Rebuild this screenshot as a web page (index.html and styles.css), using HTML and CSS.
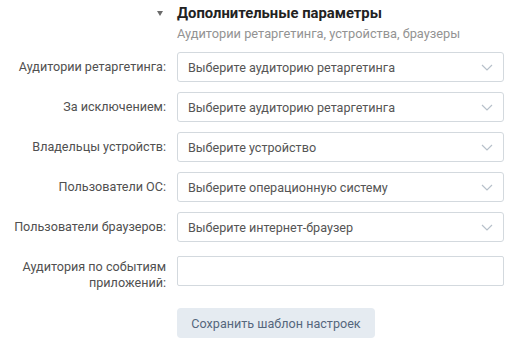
FILE: index.html
```html
<!DOCTYPE html>
<html lang="ru">
<head>
  <meta charset="UTF-8">
  <title>Дополнительные параметры</title>
  <link rel="stylesheet" href="styles.css">
</head>
<body>
  <div class="panel">
    <!-- заголовок блока -->
    <div class="section-head">
      <span class="arrow"></span>
      <div>
        <div class="section-title">Дополнительные параметры</div>
        <div class="section-sub">Аудитории ретаргетинга, устройства, браузеры</div>
      </div>
    </div>

    <div class="form">
      <div class="label">Аудитории ретаргетинга:</div>
      <div class="select">Выберите аудиторию ретаргетинга<svg class="chev" width="12" height="7" viewBox="0 0 12 7"><path d="M1 1l5 5 5-5" fill="none" stroke="#b7c0ca" stroke-width="1.2"/></svg></div>

      <div class="label">За исключением:</div>
      <div class="select">Выберите аудиторию ретаргетинга<svg class="chev" width="12" height="7" viewBox="0 0 12 7"><path d="M1 1l5 5 5-5" fill="none" stroke="#b7c0ca" stroke-width="1.2"/></svg></div>

      <div class="label">Владельцы устройств:</div>
      <div class="select">Выберите устройство<svg class="chev" width="12" height="7" viewBox="0 0 12 7"><path d="M1 1l5 5 5-5" fill="none" stroke="#b7c0ca" stroke-width="1.2"/></svg></div>

      <div class="label">Пользователи ОС:</div>
      <div class="select">Выберите операционную систему<svg class="chev" width="12" height="7" viewBox="0 0 12 7"><path d="M1 1l5 5 5-5" fill="none" stroke="#b7c0ca" stroke-width="1.2"/></svg></div>

      <div class="label">Пользователи браузеров:</div>
      <div class="select">Выберите интернет-браузер<svg class="chev" width="12" height="7" viewBox="0 0 12 7"><path d="M1 1l5 5 5-5" fill="none" stroke="#b7c0ca" stroke-width="1.2"/></svg></div>

      <div class="label label-wide">Аудитория по событиям<br>приложений:</div>
      <div class="input input-wide"></div>

      <div></div>
      <div class="actions"><button class="btn">Сохранить шаблон настроек</button></div>
    </div>
  </div>
</body>
</html>
```

FILE: styles.css
```css
body {
  margin: 0;
  font-family: Roboto, "Liberation Sans", Arial, sans-serif;
  font-size: 12.6px;
  color: #555;
  background: #fff;
}
.panel {
  width: 520px;
  padding-top: 5px;
}
.section-head {
  display: flex;
  align-items: flex-start;
  padding-left: 157px;
}
.arrow {
  width: 0;
  height: 0;
  margin-top: 6px;
  margin-right: 14px;
  border-left: 3px solid transparent;
  border-right: 3px solid transparent;
  border-top: 5px solid #6b6b6b;
}
.section-title {
  font-size: 14.8px;
  font-weight: bold;
  color: #222;
  line-height: 17px;
}
.section-sub {
  font-size: 12.8px;
  color: #939393;
  line-height: 16px;
  margin-top: 4px;
}
.form {
  display: grid;
  grid-template-columns: 166px 327px;
  column-gap: 11px;
  row-gap: 10px;
  margin-top: 10px;
}
.label {
  text-align: right;
  line-height: 30px;
  color: #505050;
  white-space: nowrap;
}
.label-wide {
  line-height: 16px;
  align-self: start;
  margin-top: 7px;
}
.select, .input {
  box-sizing: border-box;
  height: 30px;
  border: 1px solid #d3d9de;
  border-radius: 3px;
  padding: 0 10px;
  display: flex;
  align-items: center;
  justify-content: space-between;
  color: #555;
}
.input-wide {
  margin-top: 4px;
  border-radius: 2px;
}
.actions {
  padding-top: 7px;
}
.btn {
  font-family: Roboto, "Liberation Sans", Arial, sans-serif;
  font-size: 12.6px;
  color: #55677d;
  background: #e5ebf1;
  border: 0;
  border-radius: 4px;
  height: 30px;
  width: 198px;
  padding: 0;
}
```
